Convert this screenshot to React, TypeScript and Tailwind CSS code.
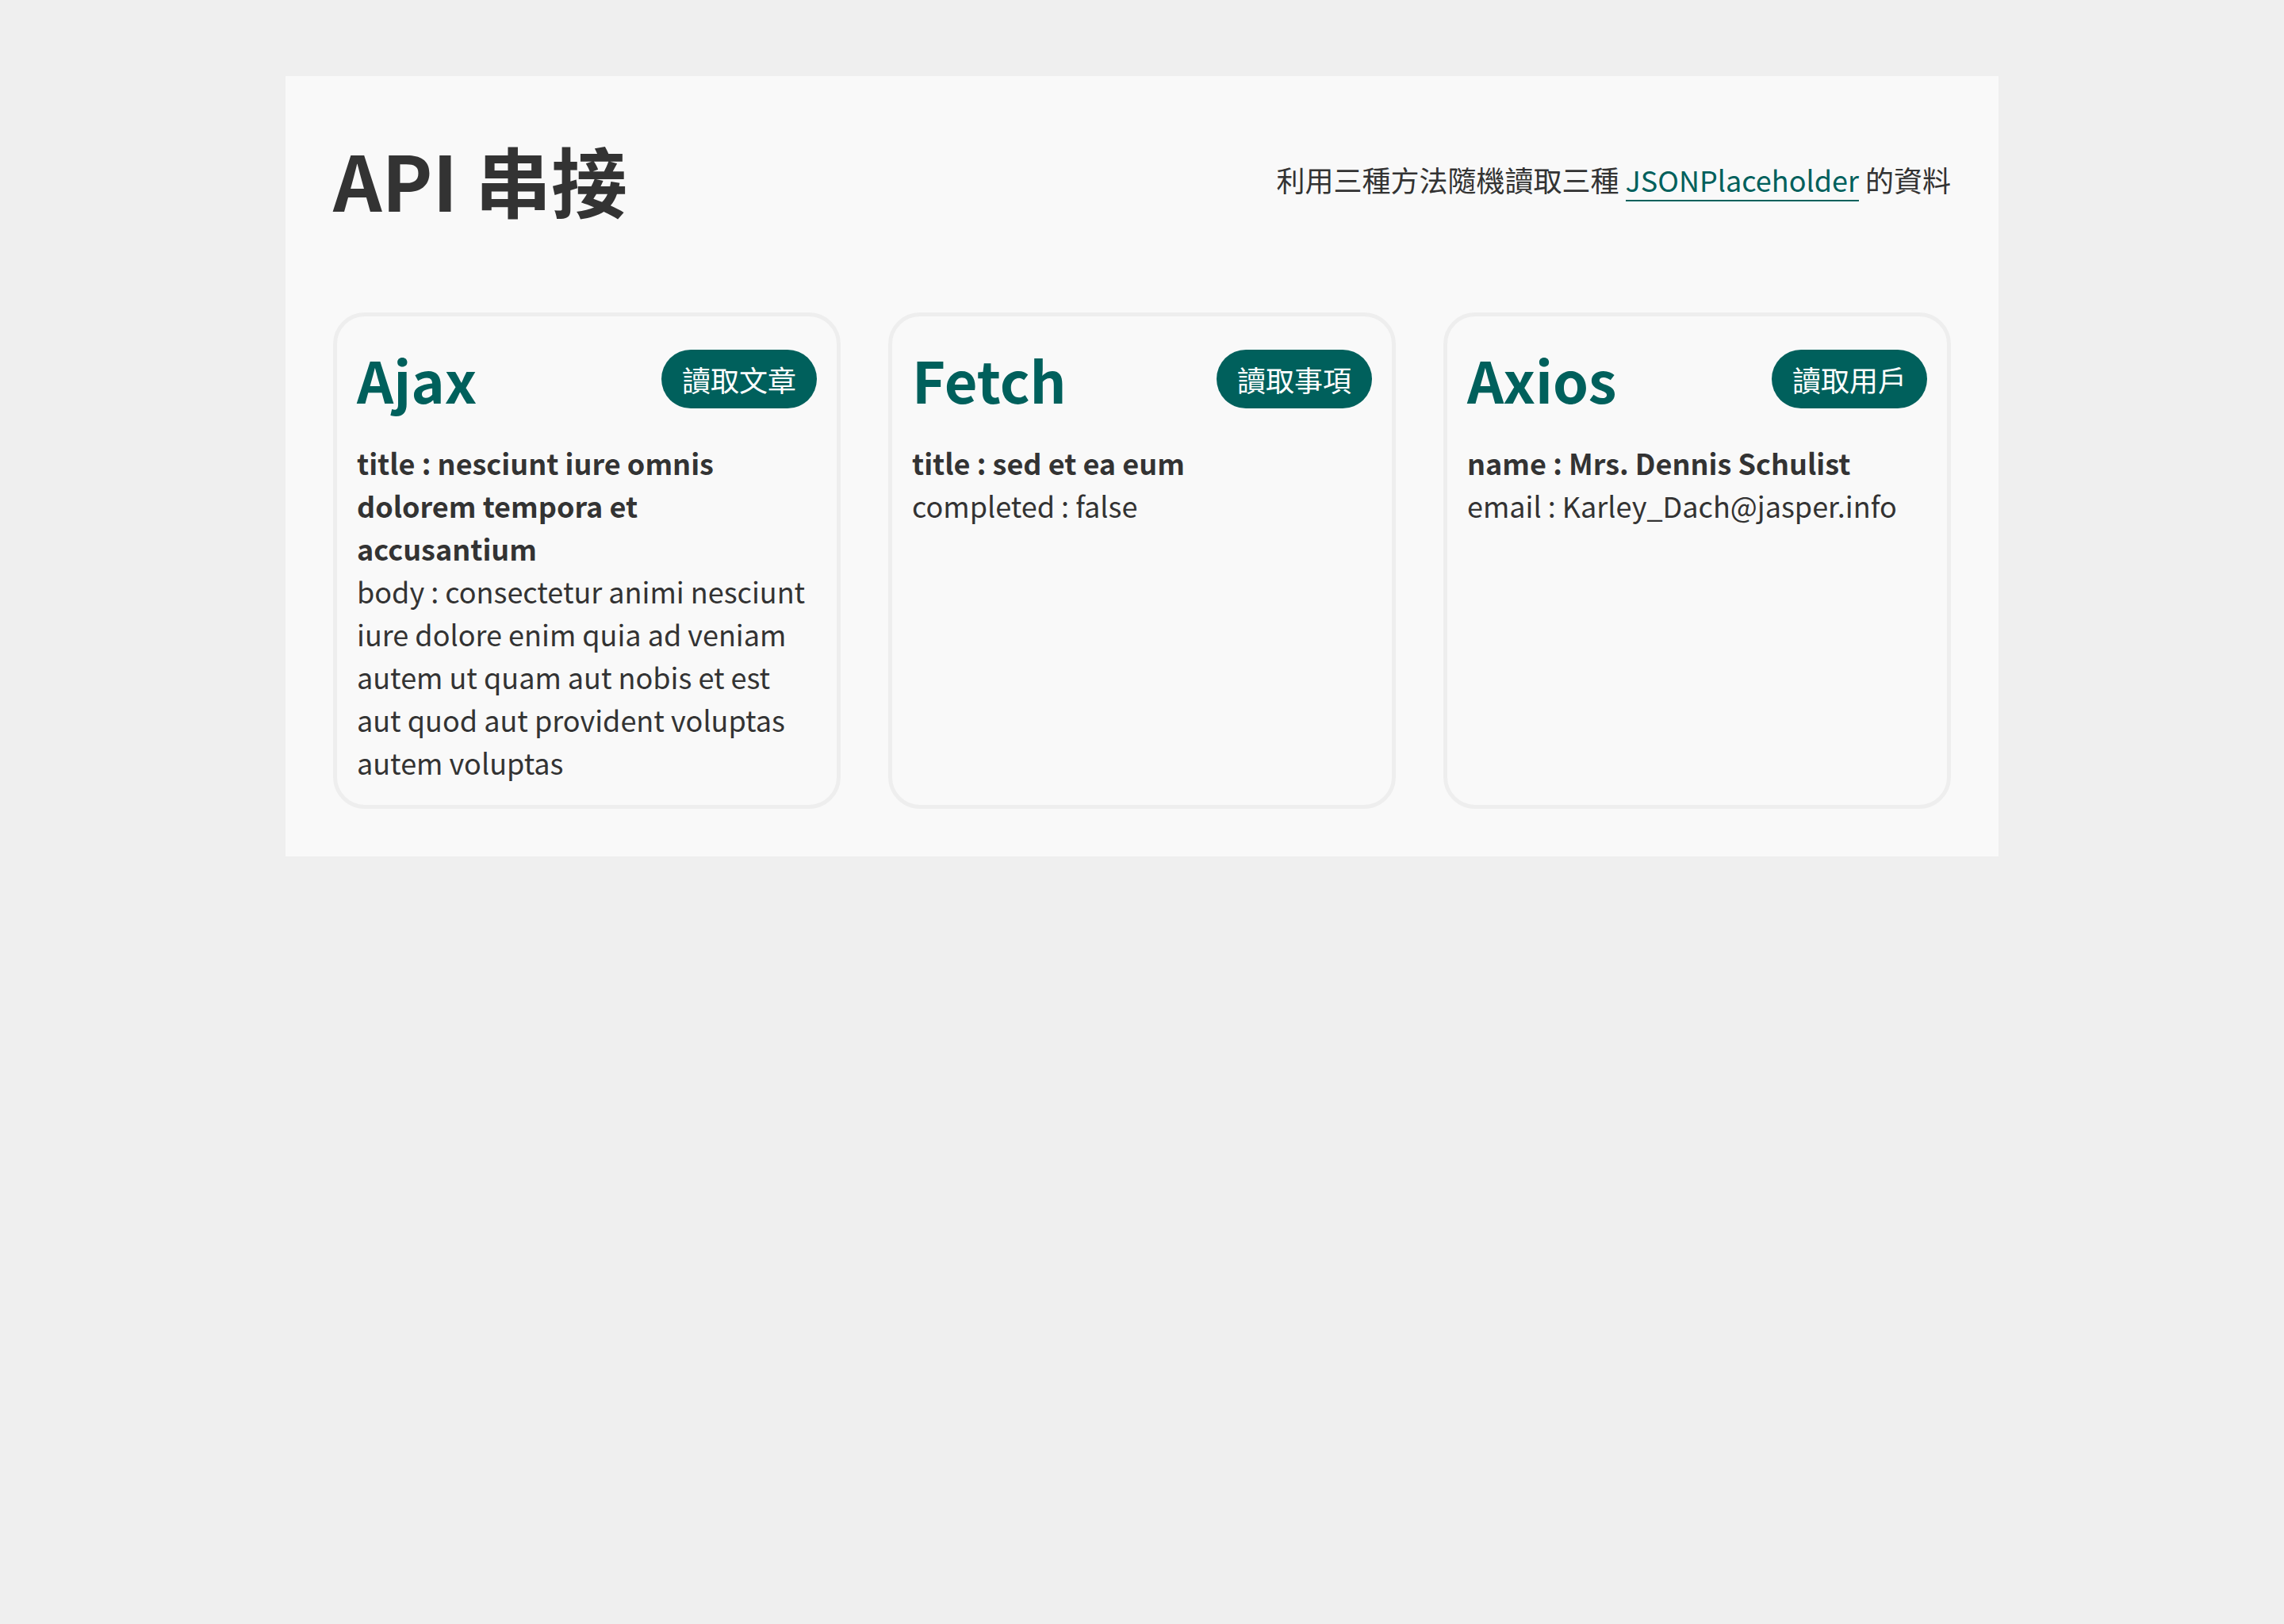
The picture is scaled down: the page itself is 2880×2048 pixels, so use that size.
const cards = [
  {
    name: "Ajax",
    action: "讀取文章",
    bold: "title : nesciunt iure omnis dolorem tempora et accusantium",
    text: "body : consectetur animi nesciunt iure dolore enim quia ad veniam autem ut quam aut nobis et est aut quod aut provident voluptas autem voluptas",
  },
  {
    name: "Fetch",
    action: "讀取事項",
    bold: "title : sed et ea eum",
    text: "completed : false",
  },
  {
    name: "Axios",
    action: "讀取用戶",
    bold: "name : Mrs. Dennis Schulist",
    text: "email : Karley_Dach@jasper.info",
  },
];

function ApiCard({ name, action, bold, text }: Record<"name" | "action" | "bold" | "text", string>) {
  return (
    <div className="rounded-[40px] border-[5px] border-[#eeeeee] bg-[#f9f9f9] px-[25px] pt-[25px] pb-[27px]">
      <div className="flex items-center justify-between">
        <h2 className="text-[72px] leading-[1.5] font-bold text-[#00605c]">{name}</h2>
        <button className="rounded-full bg-[#00605c] px-[26px] py-[10px] text-[36px] leading-[1.5] text-white">
          {action}
        </button>
      </div>
      <div className="mt-[24px] text-[36px] leading-[1.5] text-[#333333]">
        <p className="font-bold">{bold}</p>
        <p>{text}</p>
      </div>
    </div>
  );
}

export default function App() {
  return (
    <div
      className="min-h-screen bg-[#efefef] pt-[96px]"
      style={{ fontFamily: '"Noto Sans CJK TC", "Noto Sans", sans-serif' }}
    >
      <section className="mx-auto w-[2160px] bg-[#f9f9f9] px-[60px] pt-[58px] pb-[60px]">
        <div className="flex items-center justify-between">
          <h1 className="text-[96px] leading-[1.5] font-bold text-[#333333]">API 串接</h1>
          <p className="text-[36px] leading-[1.5] text-[#333333]">
            利用三種方法隨機讀取三種{" "}
            <a className="border-b-2 border-[#00605c] text-[#00605c]">JSONPlaceholder</a> 的資料
          </p>
        </div>
        <div className="mt-[96px] grid grid-cols-3 gap-[60px]">
          {cards.map((card) => (
            <ApiCard key={card.name} {...card} />
          ))}
        </div>
      </section>
    </div>
  );
}
